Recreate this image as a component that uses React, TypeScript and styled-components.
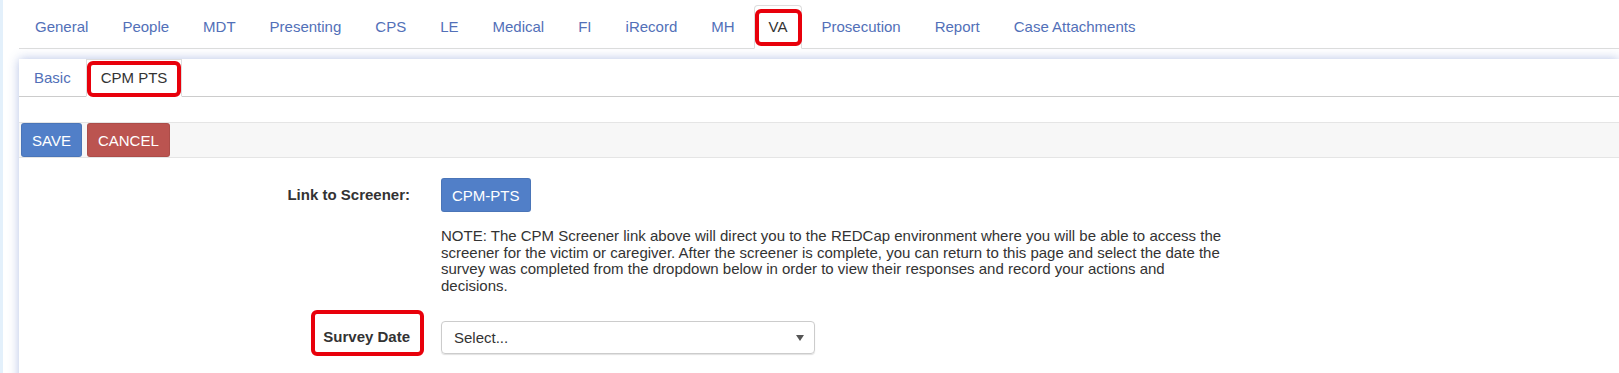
import React from 'react';
import styled, { createGlobalStyle, css } from 'styled-components';

const GlobalStyle = createGlobalStyle`
  html, body {
    margin: 0;
    padding: 0;
    background: #fff;
  }
  body {
    font-family: "Liberation Sans", Arial, Helvetica, sans-serif;
    font-size: 15px;
    color: #333;
  }
  * {
    box-sizing: border-box;
  }
`;

// red annotation frame drawn over a part of the page
const mark = (inset: string) => css`
  &::after {
    content: '';
    position: absolute;
    inset: ${inset};
    border: 4px solid #e8000b;
    border-radius: 6px;
    pointer-events: none;
  }
`;

const Page = styled.div`
  min-height: 373px;
  border-left: 3px solid #e3f0fb;
  padding: 5px 0 0 16px;
  overflow: hidden;
`;

const TabBar = styled.ul`
  display: flex;
  gap: 4px;
  margin: 0;
  padding: 0 0 0 1px;
  list-style: none;
  border-bottom: 1px solid #ddd;
`;

const TabLink = styled.a<{ $active?: boolean; $mark?: string }>`
  position: relative;
  display: block;
  margin-bottom: -1px;
  padding: 11px 14px;
  line-height: 20px;
  border: 1px solid transparent;
  border-radius: 4px 4px 0 0;
  color: #5270b8;
  text-decoration: none;
  white-space: nowrap;
  ${p =>
    p.$active &&
    css`
      color: #333;
      background: #fff;
      border-color: #ddd #ddd transparent;
    `}
  ${p => p.$mark && mark(p.$mark)}
`;

const Panel = styled.div`
  margin-top: 10px;
  min-height: 330px;
  background: #fff;
  box-shadow: 0 0 10px rgba(90, 120, 200, 0.45);
`;

const SubTabBar = styled.ul`
  display: flex;
  margin: 0;
  padding: 0;
  list-style: none;
  border-bottom: 1px solid #ccc;
`;

const SubTabLink = styled(TabLink)`
  padding: 8px 14px;
  border-radius: 0;
  ${p =>
    p.$active &&
    css`
      border-color: #ddd #ddd transparent;
    `}
`;

const PanelBody = styled.div`
  padding-top: 25px;
`;

const Toolbar = styled.div`
  display: flex;
  gap: 5px;
  padding: 0 2px;
  background: #f7f7f7;
  border-top: 1px solid #e5e5e5;
  border-bottom: 1px solid #e5e5e5;
`;

const Button = styled.button<{ $tone: 'primary' | 'danger' }>`
  height: 34px;
  padding: 0 10px;
  font-family: inherit;
  font-size: 15px;
  color: #fff;
  border: 1px solid rgba(0, 0, 0, 0.08);
  border-radius: 3px;
  background: ${p => (p.$tone === 'primary' ? '#517fc8' : '#bb5450')};
  cursor: pointer;
`;

const Form = styled.div`
  padding-top: 20px;
`;

const FormRow = styled.div<{ $gap?: number }>`
  display: grid;
  grid-template-columns: 391px 785px;
  column-gap: 31px;
  align-items: center;
  margin-top: ${p => p.$gap ?? 0}px;
`;

const Label = styled.div`
  text-align: right;
  font-weight: bold;
  line-height: 20px;
`;

const Marked = styled.span<{ $mark: string }>`
  position: relative;
  display: inline-block;
  ${p => mark(p.$mark)}
`;

const LinkButton = styled(Button)`
  justify-self: start;
`;

const Note = styled.p`
  grid-column: 2;
  margin: 0;
  line-height: 16.7px;
`;

const Select = styled.div`
  display: flex;
  align-items: center;
  justify-content: space-between;
  width: 374px;
  height: 33px;
  padding: 0 10px 0 12px;
  border: 1px solid #ccc;
  border-radius: 4px;
  box-shadow: 0 1px 1px rgba(0, 0, 0, 0.12);
  color: #333;
`;

const Caret = styled.span`
  width: 0;
  height: 0;
  border-left: 4px solid transparent;
  border-right: 4px solid transparent;
  border-top: 6px solid #555;
  margin-top: 2px;
`;

const navItems = [
  'General',
  'People',
  'MDT',
  'Presenting',
  'CPS',
  'LE',
  'Medical',
  'FI',
  'iRecord',
  'MH',
  'VA',
  'Prosecution',
  'Report',
  'Case Attachments',
];

const App: React.FC = () => {
  return (
    <>
      <GlobalStyle />
      <Page>
        <TabBar>
          {navItems.map(item => (
            <li key={item}>
              <TabLink
                href="#"
                $active={item === 'VA'}
                $mark={item === 'VA' ? '3px -1px 2px 0' : undefined}
              >
                {item}
              </TabLink>
            </li>
          ))}
        </TabBar>

        <Panel>
          <SubTabBar>
            <li>
              <SubTabLink href="#">Basic</SubTabLink>
            </li>
            <li>
              <SubTabLink href="#" $active $mark="1px 0 -1px 0">
                CPM PTS
              </SubTabLink>
            </li>
          </SubTabBar>

          <PanelBody>
            <Toolbar>
              <Button $tone="primary">SAVE</Button>
              <Button $tone="danger">CANCEL</Button>
            </Toolbar>

            <Form>
              <FormRow>
                <Label>Link to Screener:</Label>
                <LinkButton $tone="primary">CPM-PTS</LinkButton>
              </FormRow>
              <FormRow $gap={16}>
                <Note>
                  NOTE: The CPM Screener link above will direct you to the REDCap environment where you
                  will be able to access the screener for the victim or caregiver. After the screener is
                  complete, you can return to this page and select the date the survey was completed from
                  the dropdown below in order to view their responses and record your actions and
                  decisions.
                </Note>
              </FormRow>
              <FormRow $gap={26}>
                <Label>
                  <Marked $mark="-17px -14px -9px -12px">Survey Date</Marked>
                </Label>
                <Select>
                  <span>Select...</span>
                  <Caret />
                </Select>
              </FormRow>
            </Form>
          </PanelBody>
        </Panel>
      </Page>
    </>
  );
};

export default App;
